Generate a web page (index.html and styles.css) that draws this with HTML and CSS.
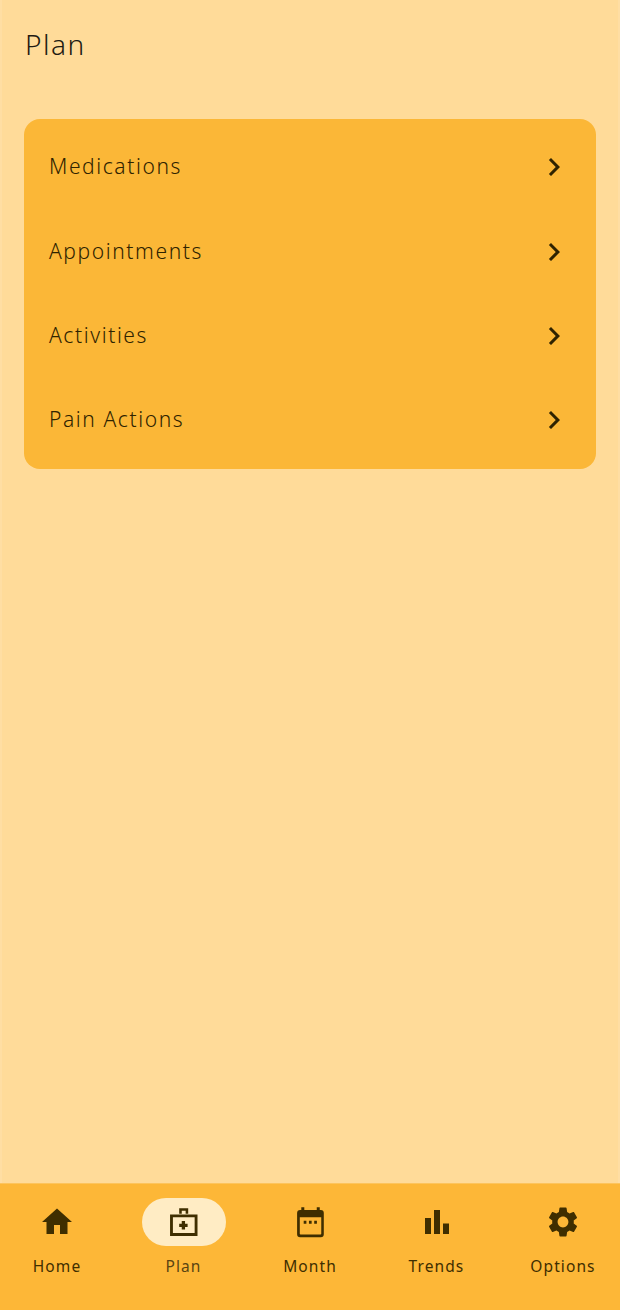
FILE: index.html
```html
<!DOCTYPE html>
<html lang="en">
  <head>
    <meta charset="UTF-8" />
    <title>Plan</title>
    <link rel="stylesheet" href="styles.css">
  </head>
  <body>
    <div class="screen">
      <h1 class="title">Plan</h1>
      <ul class="menu">
        <li class="menu-row">
          <span>Medications</span>
          <svg class="chevron" viewBox="0 0 24 24"><path d="M10 6L8.59 7.41 13.17 12l-4.58 4.59L10 18l6-6z"/></svg>
        </li>
        <li class="menu-row">
          <span>Appointments</span>
          <svg class="chevron" viewBox="0 0 24 24"><path d="M10 6L8.59 7.41 13.17 12l-4.58 4.59L10 18l6-6z"/></svg>
        </li>
        <li class="menu-row">
          <span>Activities</span>
          <svg class="chevron" viewBox="0 0 24 24"><path d="M10 6L8.59 7.41 13.17 12l-4.58 4.59L10 18l6-6z"/></svg>
        </li>
        <li class="menu-row">
          <span>Pain Actions</span>
          <svg class="chevron" viewBox="0 0 24 24"><path d="M10 6L8.59 7.41 13.17 12l-4.58 4.59L10 18l6-6z"/></svg>
        </li>
      </ul>
    </div>
    <nav class="tabs">
      <div class="tab">
        <div class="tab-icon">
          <svg viewBox="0 0 24 24"><path d="M10 20v-6h4v6h5v-8h3L12 3 2 12h3v8z"/></svg>
        </div>
        <span class="tab-label">Home</span>
      </div>
      <div class="tab active">
        <div class="tab-icon">
          <svg viewBox="0 0 24 24"><path fill-rule="evenodd" d="M8.800 2.900h6v3.600h-1.700V4.500h-2.600v2H8.800zM2.700 7H21v14.300H2.700zm1.900 1.900v10.500h14.500V8.900zM10.500 11.400h2.200v1.700h1.700v2.200h-1.700V17h-2.200v-1.700H8.800v-2.200h1.700z"/></svg>
        </div>
        <span class="tab-label">Plan</span>
      </div>
      <div class="tab">
        <div class="tab-icon">
          <svg viewBox="0 0 24 24"><path fill-rule="evenodd" d="M6.200 2.200h2V4h8.300V2.200h2V4h.7a2 2 0 0 1 2 2v14.200a2 2 0 0 1-2 2H5.400a2 2 0 0 1-2-2V6a2 2 0 0 1 2-2h.8zM5.200 8.900v11a.5.5 0 0 0 .5.5h13.300a.5.5 0 0 0 .5-.5v-11zM7.800 11.200h1.800v2H7.800zm3.500 0h1.800v2h-1.800zm3.500 0h1.800v2h-1.800z"/></svg>
        </div>
        <span class="tab-label">Month</span>
      </div>
      <div class="tab">
        <div class="tab-icon">
          <svg viewBox="0 0 24 24"><path d="M4 9.300h4V20H4zM10 4h4v16h-4zM16 13h4v7h-4z"/></svg>
        </div>
        <span class="tab-label">Trends</span>
      </div>
      <div class="tab">
        <div class="tab-icon">
          <svg viewBox="0 0 24 24"><path d="M19.140 12.940c.04-.3.060-.61.060-.94 0-.32-.02-.64-.07-.94l2.030-1.580c.18-.14.230-.41.120-.61l-1.920-3.320c-.12-.22-.37-.29-.59-.22l-2.390.96c-.5-.38-1.030-.7-1.620-.94l-.36-2.540c-.04-.24-.24-.41-.48-.41h-3.840c-.24 0-.43.170-.47.410l-.36 2.540c-.59.240-1.130.570-1.620.940l-2.390-.96c-.22-.08-.47 0-.59.220L2.740 8.870c-.12.210-.08.470.120.610l2.030 1.580c-.05.300-.09.630-.09.940s.020.640.070.940l-2.030 1.580c-.18.140-.23.410-.12.610l1.920 3.320c.12.220.370.290.590.220l2.390-.96c.5.380 1.030.7 1.620.94l.36 2.540c.05.240.240.410.480.410h3.840c.24 0 .44-.17.470-.41l.36-2.540c.59-.24 1.130-.56 1.620-.94l2.390.96c.22.080.47 0 .59-.22l1.920-3.320c.12-.22.070-.47-.12-.61l-2.010-1.580zM12 15.600c-1.980 0-3.600-1.620-3.600-3.600s1.620-3.600 3.600-3.600 3.600 1.620 3.600 3.600-1.620 3.600-3.600 3.600z"/></svg>
        </div>
        <span class="tab-label">Options</span>
      </div>
    </nav>
  </body>
</html>
```

FILE: styles.css
```css
* {
  box-sizing: border-box;
}
body {
  margin: 0;
  height: 1310px;
  display: flex;
  flex-direction: column;
  background-color: #ffdb99;
  font-family: "Noto Sans", "Open Sans", sans-serif;
  font-weight: 300;
  overflow: hidden;
}
.screen {
  flex: 1;
  padding: 0 22px;
  border-left: 2px solid #ffdea3;
  border-right: 2px solid #ffdea3;
}
.title {
  margin: 0;
  padding: 25px 0 0 1px;
  height: 119px;
  font-size: 28px;
  line-height: 38px;
  font-weight: 350;
  letter-spacing: 1.5px;
  color: #1f1b13;
}
.menu {
  margin: 0;
  padding: 6px 0;
  list-style-type: none;
  background-color: #fbb737;
  border-radius: 16px;
}
.menu-row {
  height: 84.4px;
  padding: 0 24px 2px 25px;
  display: flex;
  align-items: center;
  justify-content: space-between;
  font-size: 21px;
  font-weight: 350;
  letter-spacing: 1.6px;
  color: #2f2300;
}
.chevron {
  width: 36px;
  height: 36px;
  margin-bottom: -2px;
  fill: #2f2300;
}
.tabs {
  height: 127px;
  padding: 14px 15px 0;
  display: flex;
  justify-content: space-between;
  background-color: #fdb737;
  border-top: 1px solid #fdc45c;
}
.tab {
  width: 84px;
  display: flex;
  flex-direction: column;
  align-items: center;
}
.tab-icon {
  width: 84px;
  height: 48px;
  display: flex;
  align-items: center;
  justify-content: center;
  border-radius: 24px;
}
.tab-icon svg {
  width: 36px;
  height: 36px;
  fill: #3f2e00;
}
.active .tab-icon {
  background-color: #ffecc4;
}
.tab-label {
  margin-top: 8px;
  font-size: 15.5px;
  font-weight: 400;
  line-height: 24px;
  letter-spacing: 1.1px;
  white-space: nowrap;
  color: #3f2e00;
}
.active .tab-label {
  color: #5a4412;
}
```
